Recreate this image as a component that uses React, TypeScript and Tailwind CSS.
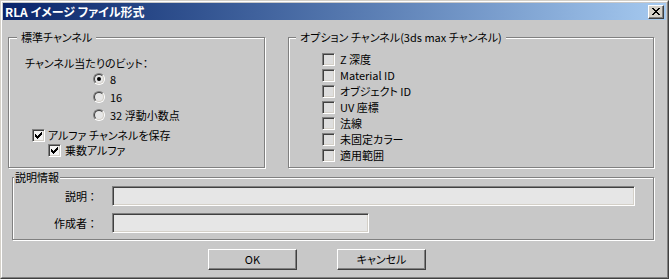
import type { ReactNode } from 'react'

function Check({ checked, disabled }: { checked?: boolean; disabled?: boolean }) {
  return (
    <span
      className={`flex h-[13px] w-[13px] shrink-0 items-center justify-center border border-[#808080] border-r-white border-b-white shadow-[inset_1px_1px_0_#404040,inset_-1px_-1px_0_#d4d0c8] ${
        disabled ? 'bg-[#dedede]' : 'bg-[#f2f2f2]'
      }`}
    >
      {checked && (
        <svg width="7" height="7" viewBox="0 0 7 7" shapeRendering="crispEdges">
          <path d="M0 2h1v3H0zM1 3h1v3H1zM2 4h1v3H2zM3 3h1v3H3zM4 2h1v3H4zM5 1h1v3H5zM6 0h1v3H6z" fill="#000" />
        </svg>
      )}
    </span>
  )
}

function Radio({ checked }: { checked?: boolean }) {
  return (
    <span className="flex h-[12px] w-[12px] shrink-0 rounded-full border border-[#808080] border-r-white border-b-white">
      <span className="flex flex-1 items-center justify-center rounded-full border border-[#404040] border-r-[#d4d0c8] border-b-[#d4d0c8] bg-[#e6e6e6]">
        {checked && <span className="h-[4px] w-[4px] rounded-full bg-black" />}
      </span>
    </span>
  )
}

function Group({ label, className, labelClass, children }: { label: string; className: string; labelClass: string; children: ReactNode }) {
  return (
    <div className={`relative shrink-0 border border-[#808080] shadow-[inset_1px_1px_0_#fff,1px_1px_0_#fff] ${className}`}>
      <span className={`absolute -top-[7px] bg-[#c8c8c8] leading-[13px] ${labelClass}`}>{label}</span>
      {children}
    </div>
  )
}

const options = ['Z 深度', 'Material ID', 'オブジェクト ID', 'UV 座標', '法線', '未固定カラー', '適用範囲']

export default function App() {
  return (
    <div className="h-[279px] w-[669px] border border-[#d4d0c8] border-r-[#404040] border-b-[#404040] bg-[#c8c8c8] font-['Noto_Sans_CJK_JP',sans-serif] text-[11px] leading-[13px] text-black [font-feature-settings:'palt']">
      <div className="flex h-full flex-col border border-white border-r-[#808080] border-b-[#808080] px-px">
        {/* Title bar */}
        <div className="mt-px flex h-[17px] shrink-0 items-center justify-between bg-gradient-to-r from-[#0a246a] to-[#a6caf0] pl-[2px] pr-[2px]">
          <span className="text-[12px] font-bold text-white">RLA イメージ ファイル形式</span>
          <button
            type="button"
            className="flex h-[14px] w-[16px] items-center justify-center border border-white border-r-[#404040] border-b-[#404040] bg-[#d4d0c8] shadow-[inset_-1px_-1px_0_#808080]"
          >
            <svg width="8" height="7" viewBox="0 0 8 7" shapeRendering="crispEdges">
              <path
                d="M0 0h2v1H0zM6 0h2v1H6zM1 1h2v1H1zM5 1h2v1H5zM2 2h4v1H2zM3 3h2v1H3zM2 4h4v1H2zM1 5h2v1H1zM5 5h2v1H5zM0 6h2v1H0zM6 6h2v1H6z"
                fill="#000"
              />
            </svg>
          </button>
        </div>

        {/* Channel groups */}
        <div className="ml-[5px] mt-[17px] flex gap-[23px]">
          <Group label="標準チャンネル" className="h-[131px] w-[257px]" labelClass="left-[8px] px-[4px]">
            <div className="flex flex-col pl-[16px] pt-[19px]">
              <span>チャンネル当たりのビット：</span>
              {['8', '16', '32 浮動小数点'].map((v, i) => (
                <div key={v} className="flex h-[18px] items-center gap-[5px] pl-[68px] first:mt-[2px]">
                  <Radio checked={i === 0} />
                  <span>{v}</span>
                </div>
              ))}
              <div className="mt-[4px] flex h-[15px] items-center gap-[3px] pl-[7px]">
                <Check checked />
                <span>アルファ チャンネルを保存</span>
              </div>
              <div className="flex h-[15px] items-center gap-[4px] pl-[23px]">
                <Check checked />
                <span>乗数アルファ</span>
              </div>
            </div>
          </Group>

          <Group label="オプション チャンネル(3ds max チャンネル)" className="h-[131px] w-[366px]" labelClass="left-[7px] px-[4px]">
            <div className="flex flex-col pl-[33px] pt-[13px]">
              {options.map((o) => (
                <div key={o} className="flex h-[16px] items-center gap-[5px]">
                  <Check disabled />
                  <span>{o}</span>
                </div>
              ))}
            </div>
          </Group>
        </div>

        {/* Description */}
        <div className="ml-[9px] mt-[9px]">
          <Group label="説明情報" className="h-[63px] w-[642px]" labelClass="left-[1px] px-px">
            <div className="flex flex-col gap-[7px] pt-[8px]">
              <div className="flex items-center gap-[17px]">
                <span className="w-[82px] text-right">説明 ：</span>
                <div className="h-[20px] w-[523px] border border-[#808080] border-r-white border-b-white bg-[#e6e6e6] shadow-[inset_1px_1px_0_#404040,inset_-1px_-1px_0_#d4d0c8]" />
              </div>
              <div className="flex items-center gap-[17px]">
                <span className="w-[82px] text-right">作成者 ：</span>
                <div className="h-[20px] w-[257px] border border-[#808080] border-r-white border-b-white bg-[#e6e6e6] shadow-[inset_1px_1px_0_#404040,inset_-1px_-1px_0_#d4d0c8]" />
              </div>
            </div>
          </Group>
        </div>

        {/* Buttons */}
        <div className="ml-[205px] mt-[9px] flex gap-[40px]">
          {['OK', 'キャンセル'].map((b) => (
            <button
              key={b}
              type="button"
              className="flex h-[21px] w-[89px] items-center justify-center border border-white border-r-[#404040] border-b-[#404040] bg-[#c8c8c8] shadow-[inset_-1px_-1px_0_#808080]"
            >
              {b}
            </button>
          ))}
        </div>
      </div>
    </div>
  )
}
